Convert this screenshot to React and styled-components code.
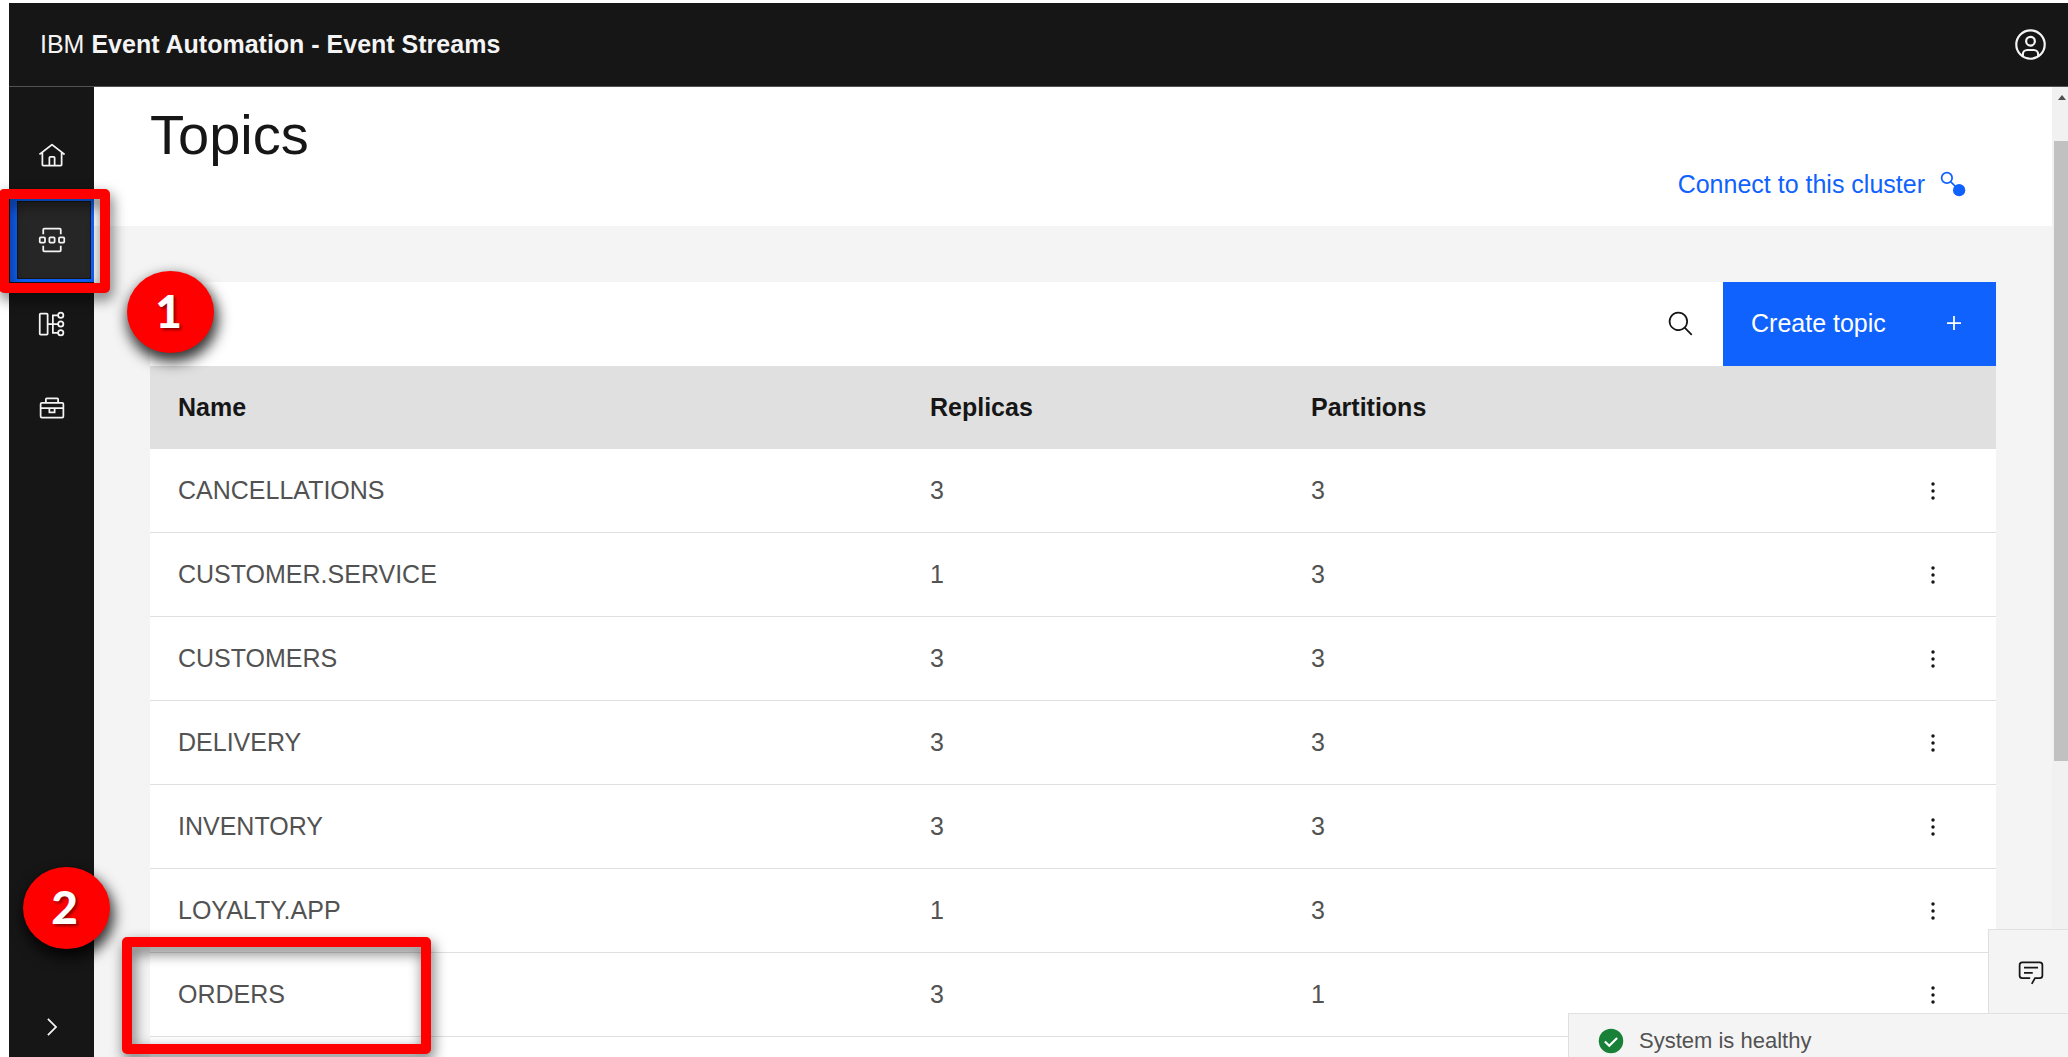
import React from "react";
import styled, { createGlobalStyle } from "styled-components";

const GlobalStyle = createGlobalStyle`
  *, *::before, *::after { box-sizing: border-box; }
  body {
    margin: 0;
    background: #ffffff;
    color: #161616;
    font-family: "Liberation Sans", Arial, sans-serif;
    font-size: 25px;
    line-height: 32px;
  }
  button { font: inherit; color: inherit; border: 0; padding: 0; background: none; cursor: pointer; }
  a { text-decoration: none; color: inherit; }
`;

const Page = styled.div`
  display: flex;
  flex-direction: column;
  height: 100vh;
  padding: 3px 0 0 9px;
  overflow: hidden;
`;

const Header = styled.header`
  flex: none;
  display: flex;
  align-items: center;
  justify-content: space-between;
  height: 84px;
  padding-left: 31px;
  background: #161616;
  border-bottom: 1px solid #525252;
  color: #f4f4f4;
`;

const Brand = styled.a`
  padding-bottom: 2px;
  white-space: pre;
`;

const AvatarButton = styled.button`
  display: flex;
  align-items: center;
  justify-content: center;
  width: 76px;
  height: 83px;
`;

const Body = styled.div`
  flex: 1;
  display: flex;
  min-height: 0;
`;

const SideNav = styled.nav`
  flex: none;
  display: flex;
  flex-direction: column;
  width: 85px;
  padding: 27px 0 0 1px;
  background: #161616;
  color: #f4f4f4;
`;

const NavLink = styled.a`
  display: flex;
  align-items: center;
  justify-content: center;
  height: 84px;
  background: ${(p) => (p.$active ? "#262626" : "transparent")};
  box-shadow: ${(p) =>
    p.$active
      ? "inset 7px 0 0 #0f62fe, inset 0 0 0 3px #0f62fe, inset 8px 0 0 #161616, inset 0 0 0 4px #161616"
      : "none"};
`;

const ExpandButton = styled.button`
  display: flex;
  align-items: center;
  justify-content: center;
  height: 60px;
  margin-top: auto;
`;

const Main = styled.main`
  flex: 1;
  display: flex;
  flex-direction: column;
  min-width: 0;
  overflow: hidden;
  background: #f4f4f4;
`;

const PageHead = styled.div`
  flex: none;
  display: flex;
  justify-content: space-between;
  height: 139px;
  padding: 0 85px 0 56px;
  background: #ffffff;
`;

const Title = styled.h1`
  margin: 0;
  padding-top: 12px;
  font-size: 56px;
  font-weight: 400;
  line-height: 72px;
`;

const ConnectLink = styled.a`
  align-self: flex-end;
  display: flex;
  align-items: center;
  gap: 14px;
  height: 84px;
  color: #0f62fe;
`;

const Panel = styled.section`
  flex: 1;
  margin: 56px 56px 0;
  background: #ffffff;
`;

const Toolbar = styled.div`
  display: flex;
  justify-content: flex-end;
  height: 84px;
`;

const SearchButton = styled.button`
  display: flex;
  align-items: center;
  justify-content: center;
  width: 84px;
`;

const CreateButton = styled.button`
  display: flex;
  align-items: center;
  justify-content: space-between;
  width: 273px;
  padding: 0 28px 2px;
  background: #0f62fe;
  color: #ffffff;
`;

const Table = styled.table`
  width: 100%;
  table-layout: fixed;
  border-collapse: separate;
  border-spacing: 0;
  text-align: left;
`;

const HeadCell = styled.th`
  width: ${(p) => p.$width || "auto"};
  height: 83px;
  padding: 0 28px 2px;
  background: #e0e0e0;
  font-weight: 700;
`;

const Cell = styled.td`
  height: 84px;
  padding: 0 28px 2px;
  border-bottom: 1px solid #e0e0e0;
  color: #525252;
`;

const MenuCell = styled(Cell)`
  padding: 0;
`;

const MenuButton = styled.button`
  display: flex;
  align-items: center;
  justify-content: center;
  width: 100%;
  height: 82px;
  color: #161616;
`;

const ScrollTrack = styled.div`
  flex: none;
  display: flex;
  flex-direction: column;
  width: 16px;
  padding: 8px 0 0 2px;
  background: #f1f1f1;
`;

const ScrollArrow = styled.div`
  align-self: flex-start;
  margin: 0 4px;
  border: 4px solid transparent;
  border-top: 0;
  border-bottom: 5px solid #505050;
`;

const ScrollThumb = styled.div`
  height: 64.5%;
  margin-top: 41px;
  background: #c1c1c1;
`;

const Dock = styled.aside`
  position: fixed;
  right: 0;
  bottom: 0;
  display: flex;
  flex-direction: column;
  align-items: flex-end;
`;

const ChatButton = styled.button`
  display: flex;
  align-items: center;
  justify-content: center;
  width: 80px;
  height: 84px;
  padding-left: 4px;
  background: #f4f4f4;
  border: solid #e0e0e0;
  border-width: 1px 0 0 1px;
`;

const Status = styled.div`
  display: flex;
  align-items: center;
  gap: 14px;
  width: 500px;
  height: 44px;
  padding: 10px 28px 0;
  background: #f4f4f4;
  border: solid #e0e0e0;
  border-width: 1px 0 0 1px;
  color: #525252;
  font-size: 22px;
`;

const Frame = styled.div`
  position: absolute;
  left: ${(p) => p.$x}px;
  top: ${(p) => p.$y}px;
  width: ${(p) => p.$w}px;
  height: ${(p) => p.$h}px;
  border: 10px solid #ff0000;
  border-radius: 5px;
  filter: drop-shadow(2px 6px 7px rgba(0, 0, 0, 0.6));
  pointer-events: none;
`;

const Marker = styled.div`
  position: absolute;
  left: ${(p) => p.$x}px;
  top: ${(p) => p.$y}px;
  display: flex;
  align-items: center;
  justify-content: center;
  width: 87px;
  height: 82px;
  padding: 0 4px 2px 0;
  border-radius: 50%;
  background: #ff0000;
  box-shadow: 2px 7px 14px 2px rgba(0, 0, 0, 0.8);
  color: #ffffff;
  font-family: Lato, "Open Sans", sans-serif;
  font-size: 46px;
  font-weight: 900;
  text-shadow: 2px 2px 3px rgba(0, 0, 0, 0.45);
  pointer-events: none;
`;

const Svg = styled.svg`
  flex: none;
  display: block;
  width: ${(p) => p.$size || 28}px;
  height: ${(p) => p.$size || 28}px;
  fill: ${(p) => (p.$line ? "none" : "currentColor")};
  stroke: ${(p) => (p.$line ? "currentColor" : "none")};
  stroke-width: 2;
`;

function Icon({ size, line, children }) {
  return (
    <Svg viewBox="0 0 32 32" $size={size} $line={line} aria-hidden="true">
      {children}
    </Svg>
  );
}

const HomeIcon = () => (
  <Icon>
    <path d="M16.6123,2.2138a1.01,1.01,0,0,0-1.2427,0L1,13.4194l1.2427,1.5717L4,13.6209V26a2.0041,2.0041,0,0,0,2,2H26a2.0037,2.0037,0,0,0,2-2V13.63L29.7573,15,31,13.4282ZM18,26H14V18h4Zm2,0V18a2.0023,2.0023,0,0,0-2-2H14a2.002,2.002,0,0,0-2,2v8H6V12.0615l10-7.79,10,7.8005V26Z" />
  </Icon>
);

const TopicsIcon = () => (
  <Icon line>
    <path d="M6 9.500V4A1 1 0 0 1 7 3H25A1 1 0 0 1 26 4V9.500M6 22.500V28A1 1 0 0 0 7 29H25A1 1 0 0 0 26 28V22.500" />
    <rect x="2" y="13" width="6" height="6" rx="1" />
    <rect x="13" y="13" width="6" height="6" rx="1" />
    <rect x="24" y="13" width="6" height="6" rx="1" />
  </Icon>
);

const SchemaIcon = () => (
  <Icon line>
    <rect x="2" y="4" width="9" height="24" rx="1" />
    <circle cx="26" cy="6" r="3" />
    <circle cx="26" cy="16" r="3" />
    <circle cx="26" cy="26" r="3" />
    <path d="M11 16H23M23 6H17V26H23" />
  </Icon>
);

const ToolboxIcon = () => (
  <Icon line>
    <rect x="3" y="10" width="26" height="17" rx="1.500" />
    <path d="M9 10V6A1 1 0 0 1 10 5H22A1 1 0 0 1 23 6V10M3 16H29M13 16V21H19V16" />
  </Icon>
);

const ChevronIcon = () => (
  <Icon>
    <path d="M22 16L12 26l-1.400-1.400 8.600-8.600-8.600-8.600L12 6z" />
  </Icon>
);

const AvatarIcon = () => (
  <Icon size={35} line>
    <circle cx="16" cy="16" r="13" />
    <circle cx="16" cy="13" r="4" />
    <path d="M9 27V25A4 4 0 0 1 13 21H19A4 4 0 0 1 23 25V27" />
  </Icon>
);

const ConnectIcon = () => (
  <Icon line>
    <circle cx="9" cy="9" r="6" />
    <path d="M13.500 13.500L20 20" />
    <circle cx="23" cy="23" r="7" fill="currentColor" stroke="none" />
  </Icon>
);

const SearchIcon = () => (
  <Icon>
    <path d="M29,27.5859l-7.5521-7.5521a11.0177,11.0177,0,1,0-1.4141,1.4141L27.5859,29ZM4,13a9,9,0,1,1,9,9A9.01,9.01,0,0,1,4,13Z" />
  </Icon>
);

const AddIcon = () => (
  <Icon>
    <path d="M17,15V8H15v7H8v2h7v7h2V17h7V15Z" />
  </Icon>
);

const KebabIcon = () => (
  <Icon>
    <circle cx="16" cy="8" r="2" />
    <circle cx="16" cy="16" r="2" />
    <circle cx="16" cy="24" r="2" />
  </Icon>
);

const ChatIcon = () => (
  <Icon>
    <path d="M17.74,30,16,29l4-7h6a2,2,0,0,0,2-2V8a2,2,0,0,0-2-2H6A2,2,0,0,0,4,8V20a2,2,0,0,0,2,2h9v2H6a4,4,0,0,1-4-4V8A4,4,0,0,1,6,4H26a4,4,0,0,1,4,4V20a4,4,0,0,1-4,4H21.16Z" />
    <path d="M8 10H24V12H8zM8 16H18V18H8z" />
  </Icon>
);

const HealthyIcon = () => (
  <Icon>
    <circle cx="16" cy="16" r="14" fill="#198038" />
    <path d="M9 16.500L14 21.500L23 12.500" fill="none" stroke="#ffffff" strokeWidth="2.400" />
  </Icon>
);

const topics = [
  { name: "CANCELLATIONS", replicas: 3, partitions: 3 },
  { name: "CUSTOMER.SERVICE", replicas: 1, partitions: 3 },
  { name: "CUSTOMERS", replicas: 3, partitions: 3 },
  { name: "DELIVERY", replicas: 3, partitions: 3 },
  { name: "INVENTORY", replicas: 3, partitions: 3 },
  { name: "LOYALTY.APP", replicas: 1, partitions: 3 },
  { name: "ORDERS", replicas: 3, partitions: 1 },
];

export default function App() {
  return (
    <>
      <GlobalStyle />
      <Page>
        <Header>
          <Brand href="#">
            IBM <b>Event Automation - Event Streams</b>
          </Brand>
          <AvatarButton aria-label="User profile">
            <AvatarIcon />
          </AvatarButton>
        </Header>
        <Body>
          <SideNav aria-label="Main">
            <NavLink href="#home" aria-label="Home">
              <HomeIcon />
            </NavLink>
            <NavLink href="#topics" aria-label="Topics" aria-current="page" $active>
              <TopicsIcon />
            </NavLink>
            <NavLink href="#schemas" aria-label="Schema registry">
              <SchemaIcon />
            </NavLink>
            <NavLink href="#toolbox" aria-label="Toolbox">
              <ToolboxIcon />
            </NavLink>
            <ExpandButton aria-label="Expand navigation">
              <ChevronIcon />
            </ExpandButton>
          </SideNav>
          <Main>
            <PageHead>
              <Title>Topics</Title>
              <ConnectLink href="#connect">
                Connect to this cluster
                <ConnectIcon />
              </ConnectLink>
            </PageHead>
            <Panel>
              <Toolbar>
                <SearchButton aria-label="Search topics">
                  <SearchIcon />
                </SearchButton>
                <CreateButton>
                  Create topic
                  <AddIcon />
                </CreateButton>
              </Toolbar>
              <Table>
                <thead>
                  <tr>
                    <HeadCell scope="col">Name</HeadCell>
                    <HeadCell scope="col" $width="381px">Replicas</HeadCell>
                    <HeadCell scope="col" $width="587px">Partitions</HeadCell>
                    <HeadCell scope="col" $width="126px" aria-label="Actions" />
                  </tr>
                </thead>
                <tbody>
                  {topics.map((t) => (
                    <tr key={t.name}>
                      <Cell>{t.name}</Cell>
                      <Cell>{t.replicas}</Cell>
                      <Cell>{t.partitions}</Cell>
                      <MenuCell>
                        <MenuButton aria-label={`Options for ${t.name}`}>
                          <KebabIcon />
                        </MenuButton>
                      </MenuCell>
                    </tr>
                  ))}
                </tbody>
              </Table>
            </Panel>
          </Main>
          <ScrollTrack aria-hidden="true">
            <ScrollArrow />
            <ScrollThumb />
          </ScrollTrack>
        </Body>
      </Page>
      <Dock>
        <ChatButton aria-label="Feedback">
          <ChatIcon />
        </ChatButton>
        <Status role="status">
          <HealthyIcon />
          System is healthy
        </Status>
      </Dock>
      <Frame $x={-1} $y={189} $w={111} $h={104} />
      <Frame $x={122} $y={937} $w={309} $h={117} />
      <Marker $x={127} $y={271}>1</Marker>
      <Marker $x={23} $y={867}>2</Marker>
    </>
  );
}
